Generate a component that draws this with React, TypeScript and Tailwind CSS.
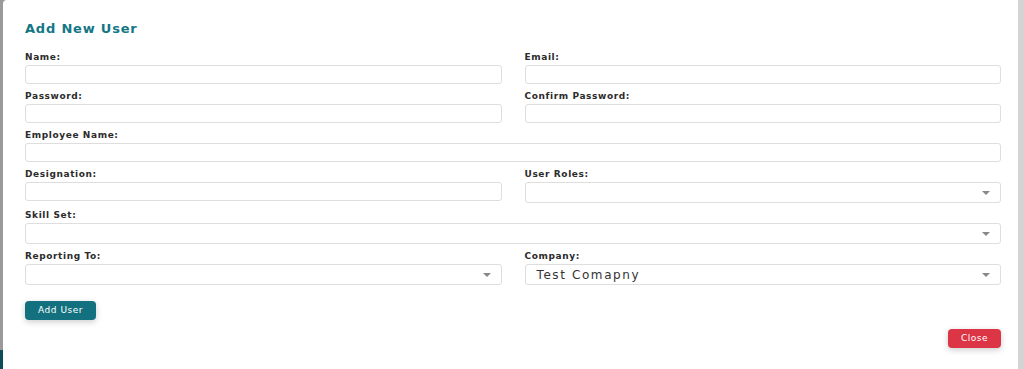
import React from "react";

const labelCls = "block text-[9px] leading-[12px] font-bold text-[#2b2b2b] tracking-[0.6px] mb-[2px]";
const inputCls = "block w-full h-[19px] rounded-[3px] border border-[#dedede] bg-white";

function Field({ label, full }: { label: string; full?: boolean }) {
  return (
    <div className={full ? "col-span-2" : ""}>
      <label className={labelCls}>{label}</label>
      <input className={inputCls} />
    </div>
  );
}

function SelectField({ label, value, full }: { label: string; value?: string; full?: boolean }) {
  return (
    <div className={full ? "col-span-2" : ""}>
      <label className={labelCls}>{label}</label>
      <div className="w-full h-[21px] rounded-[3px] border border-[#dedede] bg-white flex items-center justify-between pl-[11px] pr-[10px]">
        <span className="text-[12px] leading-[14px] text-[#333] tracking-[1.6px]">{value ?? ""}</span>
        <svg width="8" height="4" viewBox="0 0 8 4">
          <path d="M0 0 L8 0 L4 4 Z" fill="#888" />
        </svg>
      </div>
    </div>
  );
}

export default function App() {
  return (
    <div className="w-[1024px] h-[369px] flex bg-[#9a9a9a] overflow-hidden" style={{ fontFamily: "'DejaVu Sans', 'Liberation Sans', sans-serif" }}>
      <div className="w-[3px] flex flex-col">
        <div className="flex-1" />
        <div className="h-[19px] bg-[#0d4d57]" />
      </div>
      <div className="w-[1015px] h-full bg-white rounded-tl-[4px] pl-[22px] pr-[17px] pt-[21px] flex flex-col">
        <h2 className="text-[13px] leading-[16px] font-bold text-[#137685] tracking-[0.8px]">Add New User</h2>
        <div className="grid grid-cols-2 gap-x-[23px] gap-y-[6px] mt-[14px]">
          <Field label="Name:" />
          <Field label="Email:" />
          <Field label="Password:" />
          <Field label="Confirm Password:" />
          <Field label="Employee Name:" full />
          <Field label="Designation:" />
          <SelectField label="User Roles:" />
          <SelectField label="Skill Set:" full />
          <SelectField label="Reporting To:" />
          <SelectField label="Company:" value="Test Comapny" />
        </div>
        <div className="mt-[16px]">
          <button className="block h-[19px] w-[71px] rounded-[4px] bg-[#13717f] text-white text-[9px] tracking-[0.5px] shadow-[0_2px_6px_rgba(0,0,0,0.2)]">Add User</button>
        </div>
        <div className="flex justify-end mt-[9px]">
          <button className="block h-[19px] w-[53px] rounded-[4px] bg-[#dc3545] text-white text-[9px] tracking-[0.5px] shadow-[0_2px_6px_rgba(0,0,0,0.2)]">Close</button>
        </div>
      </div>
      <div className="flex-1 bg-[#d4d4d4]" />
    </div>
  );
}
